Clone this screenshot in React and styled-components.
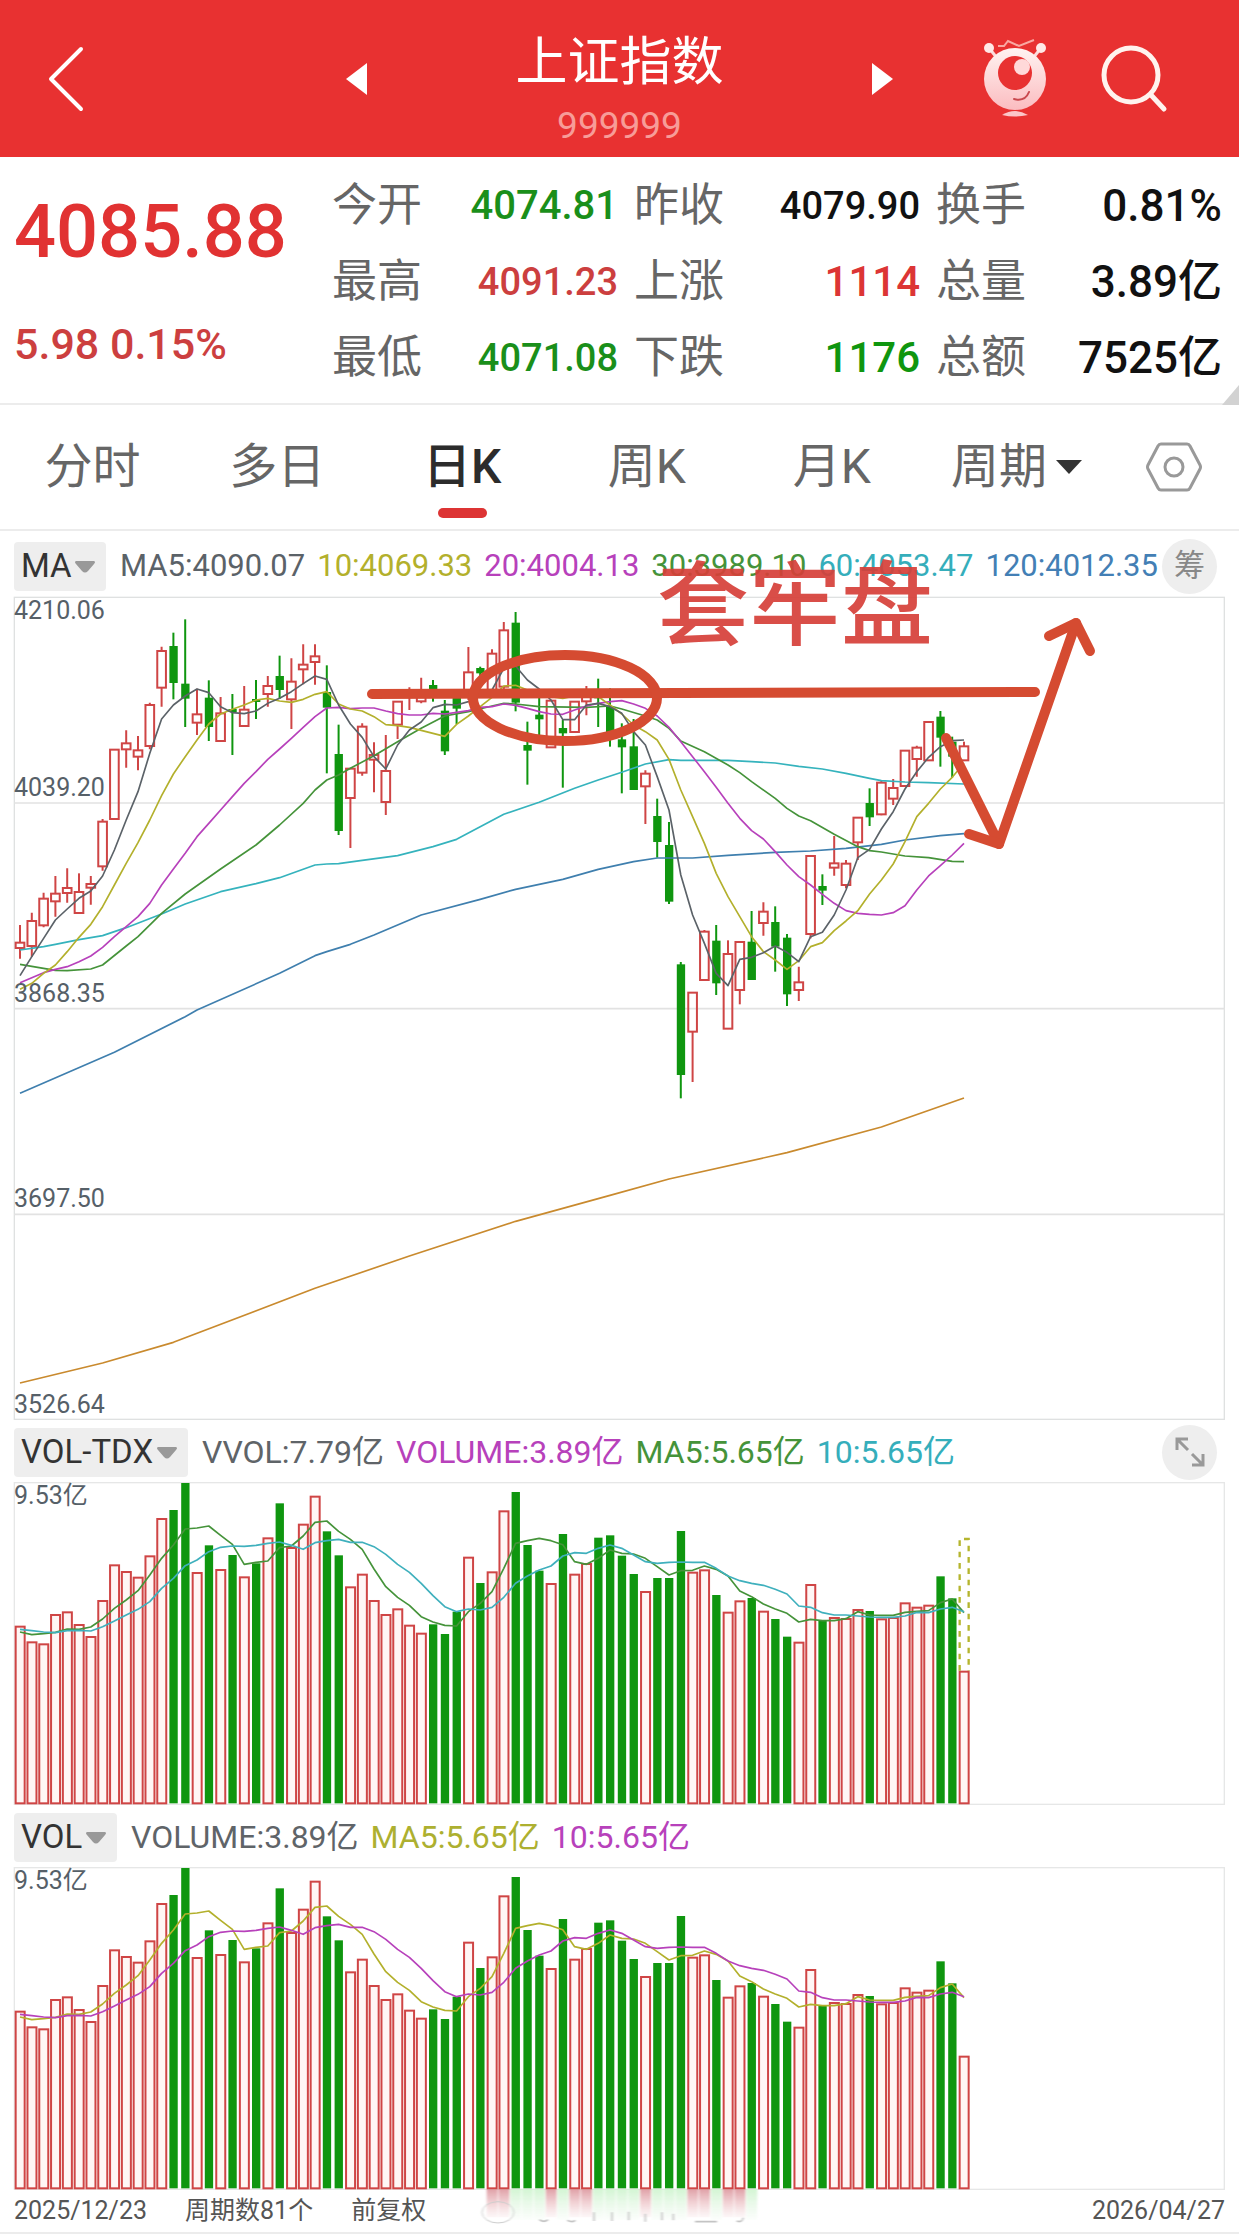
import React, { useState } from "react";
import styled, { createGlobalStyle } from "styled-components";

const RED = "#cf4545";
const GREEN = "#0f960f";

// body top, body bottom, wick top, wick bottom, direction (1 = up, 0 = down)
const candles = [
  [1058, 1074, 1005, 1106, 1],
  [993, 1068, 968, 1100, 1],
  [926, 1006, 908, 1012, 1],
  [911, 934, 858, 980, 1],
  [894, 909, 835, 938, 1],
  [906, 969, 850, 969, 1],
  [882, 893, 858, 944, 1],
  [695, 829, 687, 842, 1],
  [479, 687, 479, 690, 1],
  [460, 478, 421, 533, 1],
  [481, 500, 438, 541, 1],
  [345, 468, 338, 478, 1],
  [183, 293, 170, 350, 1],
  [168, 279, 128, 328, 0],
  [281, 326, 88, 411, 0],
  [373, 398, 296, 435, 1],
  [323, 411, 271, 453, 0],
  [370, 453, 321, 453, 1],
  [357, 366, 312, 495, 0],
  [359, 408, 288, 408, 1],
  [327, 336, 270, 387, 0],
  [288, 312, 258, 350, 1],
  [258, 300, 197, 326, 0],
  [275, 328, 205, 417, 1],
  [224, 238, 163, 283, 1],
  [199, 216, 163, 284, 1],
  [306, 353, 226, 550, 0],
  [492, 723, 404, 735, 0],
  [536, 624, 536, 774, 1],
  [410, 548, 400, 557, 1],
  [495, 509, 457, 607, 1],
  [543, 636, 435, 675, 1],
  [335, 404, 335, 447, 1],
  [305, 318, 292, 360, 1],
  [318, 334, 263, 340, 1],
  [285, 298, 270, 335, 0],
  [362, 484, 330, 495, 0],
  [318, 356, 318, 402, 0],
  [247, 310, 171, 330, 1],
  [234, 250, 230, 260, 0],
  [191, 300, 178, 310, 1],
  [121, 290, 96, 300, 1],
  [98, 338, 66, 364, 0],
  [465, 482, 395, 584, 0],
  [374, 388, 320, 450, 0],
  [332, 472, 332, 472, 1],
  [414, 430, 390, 593, 0],
  [335, 426, 335, 426, 1],
  [318, 334, 288, 376, 1],
  [316, 325, 266, 411, 0],
  [350, 427, 295, 470, 0],
  [448, 472, 400, 610, 0],
  [469, 600, 387, 600, 0],
  [551, 589, 541, 702, 1],
  [678, 756, 626, 803, 0],
  [765, 935, 696, 942, 0],
  [1123, 1455, 1116, 1525, 0],
  [1208, 1325, 1208, 1476, 1],
  [1025, 1170, 1020, 1170, 1],
  [1052, 1180, 1005, 1215, 0],
  [1092, 1316, 1051, 1316, 1],
  [1056, 1200, 1056, 1243, 1],
  [1055, 1170, 963, 1170, 0],
  [965, 999, 937, 1037, 1],
  [996, 1070, 949, 1145, 0],
  [1043, 1213, 1032, 1248, 0],
  [1177, 1200, 1130, 1233, 1],
  [798, 1032, 798, 1045, 1],
  [888, 902, 853, 945, 0],
  [820, 833, 738, 857, 1],
  [821, 885, 810, 895, 1],
  [683, 757, 683, 810, 1],
  [639, 682, 595, 708, 0],
  [578, 673, 572, 676, 1],
  [594, 626, 567, 645, 1],
  [482, 588, 482, 588, 1],
  [473, 507, 467, 560, 1],
  [396, 511, 396, 511, 1],
  [380, 443, 363, 530, 0],
  [455, 500, 440, 563, 0],
  [469, 511, 455, 511, 1],
];

const volumes = [
  620, 667, 673, 585, 577, 615, 651, 543, 436, 456, 473, 409, 297, 270, 189,
  459, 376, 450, 405, 472, 430, 355, 250, 384, 314, 230, 334, 406, 502, 464,
  543, 585, 568, 617, 641, 613, 642, 575, 413, 489, 457, 274, 216, 375, 452,
  492, 342, 464, 432, 353, 346, 407, 462, 516, 474, 474, 333, 458, 451, 525,
  578, 544, 534, 575, 597, 650, 668, 495, 600, 594, 597, 570, 573, 598, 594,
  550, 563, 557, 469, 535, 755,
];

const volumeMa5 = [
  636, 644, 641, 637, 627, 628, 621, 597, 565, 540, 512, 465, 415, 375, 327,
  324, 318, 346, 373, 433, 427, 423, 383, 378, 348, 307, 303, 334, 358, 388,
  447, 500, 532, 556, 590, 606, 616, 618, 575, 550, 515, 445, 370, 362, 355,
  362, 374, 425, 433, 415, 390, 400, 402, 415, 440, 465, 452, 451, 438, 448,
  468, 513, 530, 552, 567, 580, 606, 598, 602, 602, 596, 575, 585, 586, 586,
  577, 574, 572, 548, 537, 578,
];

const volumeMa10 = [
  628, 632, 636, 638, 632, 631, 633, 620, 603, 585, 568, 545, 505, 475, 437,
  420, 395, 382, 378, 379, 376, 370, 366, 376, 388, 368, 362, 358, 367, 367,
  380, 403, 433, 457, 490, 527, 560, 575, 567, 570, 562, 532, 490, 468, 450,
  438, 408, 398, 400, 385, 375, 385, 405, 425, 430, 427, 426, 427, 427, 445,
  468, 482, 490, 496, 508, 522, 558, 562, 578, 585, 585, 588, 591, 592, 592,
  588, 577, 578, 567, 562, 575,
];

const ma5 = [
  1157, 1100, 1045, 990, 957, 925, 903, 858, 780, 690, 605, 490, 387, 345, 318,
  297, 308, 350, 368, 371, 363, 340, 325, 305, 281, 258, 268, 345, 402, 442,
  500, 537, 465, 420, 396, 353, 343, 345, 335, 318, 300, 235, 228, 270, 297,
  330, 389, 389, 345, 340, 350, 370, 425, 465, 560, 660, 855, 975, 1060, 1150,
  1187, 1108, 1102, 1088, 1068, 1087, 1115, 1040, 1027, 975, 900, 803, 778,
  717, 665, 597, 545, 502, 470, 452, 450,
];

const ma10 = [
  1198, 1180, 1150, 1125, 1085, 1042, 1003, 950, 885, 820, 758, 690, 617, 552,
  500, 450, 402, 372, 358, 345, 330, 325, 333, 337, 328, 313, 305, 342, 357,
  363, 380, 404, 407, 412, 421, 430, 439, 403, 378, 350, 322, 288, 286, 300,
  310, 320, 325, 318, 310, 320, 345, 372, 405, 425, 450, 508, 600, 680, 760,
  850, 920, 980, 1040, 1085, 1110, 1138, 1112, 1070, 1058, 1022, 993, 962,
  912, 870, 822, 755, 680, 640, 597, 562, 520,
];

const ma20 = [
  1178, 1163, 1148, 1138, 1130, 1115, 1098, 1072, 1040, 1010, 980, 940, 885,
  837, 790, 740, 700, 660, 620, 580, 545, 508, 477, 445, 412, 380, 354, 352,
  356, 354, 354, 363, 371, 375, 375, 370, 372, 367, 362, 352, 350, 342, 346,
  355, 365, 372, 373, 360, 348, 340, 335, 332, 342, 355, 378, 412, 455, 500,
  545, 592, 640, 685, 722, 747, 785, 825, 860, 885, 913, 940, 962, 970, 973,
  975, 968, 947, 900, 858, 827, 795, 760,
];

// the slow averages are kept as [day, y] pairs
const ma30 = [
  [0, 1123], [2, 1135], [3, 1141], [4, 1142], [6, 1137], [7, 1125], [9, 1068],
  [10, 1040], [12, 970], [14, 912], [17, 837], [20, 765], [22, 705], [24, 640],
  [25, 600], [26, 570], [27, 555], [28, 535], [30, 497], [32, 455], [34, 415],
  [36, 378], [38, 365], [40, 348], [41, 340], [42, 342], [44, 350], [48, 352],
  [50, 348], [51, 357], [53, 378], [54, 390], [55, 415], [56, 453], [58, 485],
  [60, 525], [61, 548], [62, 575], [64, 625], [65, 655], [66, 678], [67, 692],
  [69, 733], [71, 770], [72, 782], [73, 786], [75, 798], [77, 803], [79, 814],
  [80, 815],
];

const ma60 = [
  [0, 1080], [2, 1070], [3, 1063], [5, 1049], [7, 1037], [9, 1013], [12, 972],
  [14, 942], [17, 905], [20, 881], [22, 863], [25, 825], [26, 822], [27, 821],
  [29, 811], [32, 797], [35, 770], [37, 748], [39, 710], [41, 673], [44, 637],
  [47, 595], [49, 570], [51, 547], [53, 522], [55, 509], [56, 511], [60, 511],
  [62, 515], [64, 519], [66, 529], [68, 537], [70, 550], [72, 565], [73, 572],
  [75, 576], [77, 578], [80, 582],
];

const ma120 = [
  [0, 1510], [8, 1387], [14, 1280], [15, 1260], [22, 1150], [25, 1097],
  [26, 1085], [28, 1063], [30, 1035], [34, 975], [39, 928], [42, 898],
  [46, 868], [49, 838], [52, 815], [54, 804], [57, 804], [60, 796], [64, 787],
  [67, 783], [70, 775], [73, 763], [75, 750], [78, 737], [80, 731],
];

const ma250 = [
  [0, 2379], [7, 2319], [13, 2257], [25, 2095], [33, 1998], [42, 1894],
  [50, 1816], [55, 1767], [65, 1688], [73, 1611], [80, 1524],
];

const averages = [
  { data: ma250, color: "#c98a2e" },
  { data: ma120, color: "#3f7fae" },
  { data: ma60, color: "#35b3bd" },
  { data: ma30, color: "#45933a" },
  { data: ma20, color: "#b741bb" },
  { data: ma10, color: "#b3b02c" },
  { data: ma5, color: "#5b6268" },
];

const priceLabels = [
  { text: "4210.06", y: 22 },
  { text: "4039.20", y: 199 },
  { text: "3868.35", y: 405 },
  { text: "3697.50", y: 610 },
  { text: "3526.64", y: 816 },
];

const quotes = [
  { label: "今开", value: "4074.81", color: "#1a8f1a", size: 40 },
  { label: "昨收", value: "4079.90", color: "#111", size: 38 },
  { label: "换手", value: "0.81%", color: "#111", size: 44 },
  { label: "最高", value: "4091.23", color: "#cc3f3f", size: 38 },
  { label: "上涨", value: "1114", color: "#dc3535", size: 42 },
  { label: "总量", value: "3.89亿", color: "#111", size: 44 },
  { label: "最低", value: "4071.08", color: "#1a8f1a", size: 38 },
  { label: "下跌", value: "1176", color: "#0f960f", size: 42 },
  { label: "总额", value: "7525亿", color: "#111", size: 44 },
];

const tabs = ["分时", "多日", "日K", "周K", "月K"];

const maLegend = [
  { text: "MA5:4090.07", color: "#5b6268" },
  { text: "10:4069.33", color: "#b3b02c" },
  { text: "20:4004.13", color: "#b741bb" },
  { text: "30:3989.10", color: "#45933a" },
  { text: "60:4053.47", color: "#35aebb" },
  { text: "120:4012.35", color: "#437fb5" },
];

const tdxLegend = [
  { text: "VVOL:7.79亿", color: "#5f6468" },
  { text: "VOLUME:3.89亿", color: "#b741bb" },
  { text: "MA5:5.65亿", color: "#45933a" },
  { text: "10:5.65亿", color: "#35aebb" },
];

const volLegend = [
  { text: "VOLUME:3.89亿", color: "#5f6468" },
  { text: "MA5:5.65亿", color: "#adb030" },
  { text: "10:5.65亿", color: "#b741bb" },
];

const dayX = (day) => 60 + day * 35.4;

const toPoints = (data) =>
  data
    .map((item, index) =>
      Array.isArray(item) ? `${dayX(item[0])},${item[1]}` : `${dayX(index)},${item}`
    )
    .join(" ");

const Line = ({ data, color }) => (
  <polyline
    points={toPoints(data)}
    fill="none"
    stroke={color}
    strokeWidth="5"
    strokeLinejoin="round"
  />
);

const PriceChart = () => (
  <Chart viewBox="0 0 1211 823" role="img" aria-label="日K">
    <g transform="scale(0.33333) translate(-42 -21)">
      <rect x="43" y="22" width="3630" height="2466" fill="#fff" stroke="#dfe1e1" strokeWidth="4" />
      {[639, 1256, 1873].map((y) => (
        <path key={y} d={`M42 ${y}H3675`} stroke="#e2e2e2" strokeWidth="5" />
      ))}
      {candles.map(([top, bottom, high, low, up], day) => {
        const x = dayX(day);
        return up ? (
          <g key={day} stroke={RED} strokeWidth="6" fill="none">
            <path d={`M${x} ${high}V${top}M${x} ${bottom}V${low}`} />
            <rect x={x - 13} y={top} width="26" height={bottom - top} />
          </g>
        ) : (
          <g key={day} fill={GREEN}>
            <rect x={x - 3} y={high} width="6" height={low - high} />
            <rect x={x - 12} y={top} width="25" height={bottom - top} />
          </g>
        );
      })}
      {averages.map(({ data, color }) => (
        <Line data={data} color={color} key={color} />
      ))}
    </g>
    {priceLabels.map(({ text, y }) => (
      <ChartLabel x="0" y={y} key={text}>
        {text}
      </ChartLabel>
    ))}
    <g fill="none" stroke="#d54b31" strokeWidth="10" strokeLinecap="round" strokeLinejoin="round">
      <path d="M358 97L1021 95" />
      <ellipse cx="551" cy="101" rx="92" ry="43" />
      <path d="M932 141L985 247L1062 26" />
      <path d="M955 237L985 247" />
      <path d="M1035 39L1062 26L1076 54" />
    </g>
    <NoteText x="643" y="41">
      套牢盘
    </NoteText>
  </Chart>
);

const VolumeChart = ({ label, fast, slow, forecast, reflection }) => (
  <Chart viewBox="0 0 1211 323" role="img" aria-label={label}>
    <defs>
      <linearGradient id="fadeUp" x1="0" y1="0" x2="0" y2="1">
        <stop offset="0" stopColor="#d98a92" stopOpacity="0.8" />
        <stop offset="1" stopColor="#e9b3b8" stopOpacity="0.1" />
      </linearGradient>
      <linearGradient id="fadeDown" x1="0" y1="0" x2="0" y2="1">
        <stop offset="0" stopColor="#c9f3c9" stopOpacity="0.8" />
        <stop offset="1" stopColor="#dcf3dc" stopOpacity="0.1" />
      </linearGradient>
      <filter id="soft" x="-20%" y="-20%" width="140%" height="140%">
        <feGaussianBlur stdDeviation="3 1" />
      </filter>
    </defs>
    <g transform="scale(0.33333) translate(-42 -186)">
      <rect x="43" y="188" width="3630" height="965" fill="#fff" stroke="#e6e7e7" strokeWidth="4" />
      {reflection && (
        <g filter="url(#soft)">
          {candles.slice(40, 63).map(([, , , , up], index) => (
            <rect
              key={index}
              x={dayX(index + 40) - 16}
              y="1153"
              width="33"
              height={up ? 84 : 92}
              fill={up ? "url(#fadeUp)" : "url(#fadeDown)"}
            />
          ))}
          <ellipse cx="1494" cy="1222" rx="48" ry="32" fill="none" stroke="#ccc" strokeWidth="3" />
          <path
            d="M1618 1244q14 10 26 0M1702 1246q14 8 24 0M1782 1248v-26M1836 1248v-26M1886 1246v-26M1936 1250v-24M1986 1246v-24M2020 1246v-20M2085 1250h66M2210 1248q16 6 20-10"
            fill="none"
            stroke="#c4c4c4"
            strokeWidth="5"
          />
        </g>
      )}
      {volumes.map((top, day) =>
        candles[day][4] ? (
          <rect
            key={day}
            x={dayX(day) - 13}
            y={top}
            width="27"
            height={1150 - top}
            fill="#fff6f5"
            stroke={RED}
            strokeWidth="6"
          />
        ) : (
          <rect key={day} x={dayX(day) - 12} y={top} width="25" height={1150 - top} fill={GREEN} />
        )
      )}
      {forecast && (
        <path
          d={`M${dayX(80) - 13} 752V357h27V752`}
          fill="none"
          stroke="#b5b52e"
          strokeWidth="7"
          strokeDasharray="17 17"
        />
      )}
      <Line data={volumeMa5} color={fast} />
      <Line data={volumeMa10} color={slow} />
    </g>
    <ChartLabel x="0" y="22">
      9.53亿
    </ChartLabel>
  </Chart>
);

const IndicatorPicker = ({ label, value }) => (
  <Picker>
    <PickerSelect aria-label={label} defaultValue={value}>
      <option>{value}</option>
    </PickerSelect>
    <svg width="22" height="13" viewBox="0 0 22 13" aria-hidden="true">
      <path d="M2 1h18q2 1 0 3l-6 7q-3 3-6 0L2 4Q0 2 2 1z" fill="#999" />
    </svg>
  </Picker>
);

const IndicatorBar = ({ label, value, legend, size, children }) => (
  <Bar>
    <IndicatorPicker label={label} value={value} />
    <Legend $size={size}>
      {legend.map(({ text, color }) => (
        <LegendItem $color={color} key={text}>
          {text}
        </LegendItem>
      ))}
    </Legend>
    {children}
  </Bar>
);

const App = () => {
  const [activeTab, setActiveTab] = useState("日K");

  return (
    <Page>
      <GlobalStyle />
      <Header>
        <IconButton aria-label="返回">
          <svg width="36" height="66" viewBox="0 0 36 66" fill="none">
            <path d="M33 3L3 33L33 63" stroke="#fff" strokeWidth="4" strokeLinecap="round" strokeLinejoin="round" />
          </svg>
        </IconButton>
        <HeaderCenter>
          <IconButton aria-label="上一个">
            <svg width="22" height="34" viewBox="0 0 22 34">
              <path d="M22 1v32L1 17z" fill="#fff" />
            </svg>
          </IconButton>
          <HeaderTitles>
            <HeaderTitle>上证指数</HeaderTitle>
            <HeaderCode>999999</HeaderCode>
          </HeaderTitles>
          <IconButton aria-label="下一个">
            <svg width="22" height="34" viewBox="0 0 22 34">
              <path d="M0 1v32l21-16z" fill="#fff" />
            </svg>
          </IconButton>
        </HeaderCenter>
        <HeaderActions>
          <IconButton aria-label="助手">
            <svg width="64" height="80" viewBox="0 0 64 80" fill="none">
              <defs>
                <linearGradient id="robot" x1="0" y1="0" x2="0" y2="1">
                  <stop offset="0" stopColor="#fff3f1" />
                  <stop offset="1" stopColor="#fbbcc0" />
                </linearGradient>
              </defs>
              <path d="M6 9l8 10M58 9l-8 10" stroke="#fcdcdc" strokeWidth="3" />
              <circle cx="6" cy="9" r="5" fill="#ffe9e7" />
              <circle cx="58" cy="9" r="5" fill="#ffe9e7" />
              <path d="M15 7h6l4-5l11 5l15-6" stroke="#f9a8a2" strokeWidth="2" />
              <circle cx="32" cy="40" r="31" fill="url(#robot)" />
              <circle cx="32" cy="34" r="17" fill="#e83131" />
              <circle cx="39" cy="28" r="8" fill="#ffd9d9" />
              <path d="M31 60q11 3 15-7" stroke="#c9484e" strokeWidth="2" strokeLinecap="round" />
              <path d="M19 76q13-8 26 0q-13 3-26 0z" fill="#fcc6c8" />
            </svg>
          </IconButton>
          <IconButton aria-label="搜索">
            <svg width="68" height="68" viewBox="0 0 68 68" fill="none" stroke="#fff3ee" strokeLinecap="round">
              <circle cx="30" cy="30" r="27" strokeWidth="5" />
              <path d="M50 50L63 64" strokeWidth="5" />
            </svg>
          </IconButton>
        </HeaderActions>
      </Header>

      <Summary>
        <div>
          <Price>4085.88</Price>
          <Change>5.98 0.15%</Change>
        </div>
        <QuoteGrid>
          {quotes.map(({ label, value, color, size }) => (
            <Quote key={label}>
              <QuoteLabel>{label}</QuoteLabel>
              <QuoteValue $color={color} $size={size}>
                {value}
              </QuoteValue>
            </Quote>
          ))}
        </QuoteGrid>
        <Corner width="17" height="20" viewBox="0 0 17 20" aria-hidden="true">
          <path d="M17 0v20H0z" fill="#d2d2d2" />
        </Corner>
      </Summary>

      <Tabs>
        {tabs.map((tab) => (
          <Tab
            key={tab}
            aria-pressed={tab === activeTab}
            $active={tab === activeTab}
            onClick={() => setActiveTab(tab)}
          >
            {tab}
          </Tab>
        ))}
        <PeriodPicker>
          <PeriodSelect aria-label="周期" defaultValue="周期">
            <option>周期</option>
          </PeriodSelect>
          <svg width="26" height="14" viewBox="0 0 26 14" aria-hidden="true">
            <path d="M0 0h26L13 14z" fill="#333" />
          </svg>
        </PeriodPicker>
        <SettingsButton aria-label="设置">
          <svg width="56" height="52" viewBox="0 0 56 52" fill="none" stroke="#999" strokeWidth="3">
            <path d="M15 3h26q2 0 3 2l10 19q1 2 0 4L44 47q-1 2-3 2H15q-2 0-3-2L2 28q-1-2 0-4L12 5q1-2 3-2z" />
            <circle cx="28" cy="26" r="9" />
          </svg>
        </SettingsButton>
      </Tabs>

      <main>
        <IndicatorBar label="主图指标" value="MA" legend={maLegend} size={31}>
          <RoundButton>筹</RoundButton>
        </IndicatorBar>
        <PriceChart />
        <IndicatorBar label="副图指标一" value="VOL-TDX" legend={tdxLegend} size={32}>
          <RoundButton aria-label="全屏">
            <svg width="30" height="30" viewBox="0 0 30 30" fill="none" stroke="#999" strokeWidth="3">
              <path d="M2 13V2h11M2 2l11 11" />
              <path d="M28 17v11H17M28 28L17 17" />
            </svg>
          </RoundButton>
        </IndicatorBar>
        <VolumeChart label="VOL-TDX" fast="#45933a" slow="#3fb0bd" forecast />
        <IndicatorBar label="副图指标二" value="VOL" legend={volLegend} size={32} />
        <VolumeChart label="VOL" fast="#b3b02c" slow="#b741bb" reflection />
      </main>

      <Footer>
        <span>2025/12/23</span>
        <span>周期数81个</span>
        <span>前复权</span>
        <FooterEnd>2026/04/27</FooterEnd>
      </Footer>
    </Page>
  );
};

const GlobalStyle = createGlobalStyle`
  * {
    box-sizing: border-box;
  }
  body {
    margin: 0;
    background: #fff;
    font-family: Roboto, "Noto Sans CJK SC", sans-serif;
  }
  button,
  select {
    margin: 0;
    padding: 0;
    border: 0;
    background: none;
    font: inherit;
    color: inherit;
    cursor: pointer;
  }
`;

const Page = styled.div`
  overflow: hidden;
`;

const Header = styled.header`
  display: grid;
  grid-template-columns: 1fr 550px 1fr;
  align-items: center;
  min-height: 157px;
  padding: 0 48px;
  background: #e83131;
  color: #fff;
`;

const IconButton = styled.button`
  display: flex;
`;

const HeaderCenter = styled.div`
  display: flex;
  align-items: center;
  justify-content: space-between;
`;

const HeaderTitles = styled.div`
  padding-top: 22px;
  text-align: center;
`;

const HeaderTitle = styled.h1`
  margin: 0;
  font-size: 52px;
  font-weight: 400;
  line-height: 72px;
`;

const HeaderCode = styled.div`
  font-size: 37px;
  line-height: 54px;
  color: #f79c98;
`;

const HeaderActions = styled.div`
  display: flex;
  align-items: center;
  justify-content: flex-end;
  gap: 54px;
  padding-right: 22px;
`;

const Summary = styled.section`
  position: relative;
  display: grid;
  grid-template-columns: 318px 1fr;
  padding: 11px 17px 7px 14px;
  border-bottom: 2px solid #ececec;
`;

const Price = styled.div`
  font-size: 74px;
  font-weight: 500;
  line-height: 128px;
  color: #e13232;
`;

const Change = styled.div`
  font-size: 43px;
  font-weight: 500;
  line-height: 96px;
  color: #cc3f3f;
`;

const QuoteGrid = styled.dl`
  display: grid;
  grid-template-columns: repeat(3, 1fr);
  column-gap: 16px;
  margin: 0;
`;

const Quote = styled.div`
  display: flex;
  align-items: center;
  justify-content: space-between;
  height: 76px;
`;

const QuoteLabel = styled.dt`
  font-size: 45px;
  line-height: 60px;
  color: #666;
`;

const QuoteValue = styled.dd`
  margin: 0;
  font-size: ${(props) => props.$size}px;
  font-weight: 500;
  line-height: 60px;
  color: ${(props) => props.$color};
`;

const Corner = styled.svg`
  position: absolute;
  right: 0;
  bottom: -2px;
`;

const Tabs = styled.nav`
  display: flex;
  border-bottom: 2px solid #ececec;
`;

const Tab = styled.button`
  display: flex;
  flex: 1 1 0;
  flex-direction: column;
  align-items: center;
  padding: 32px 0 11px;
  font-size: 48px;
  font-weight: ${(props) => (props.$active ? 500 : 400)};
  line-height: 60px;
  color: ${(props) => (props.$active ? "#2c2c2c" : "#666")};
  &::after {
    content: "";
    width: 49px;
    height: 10px;
    margin-top: 11px;
    border-radius: 5px;
    background: ${(props) => (props.$active ? "#dd3434" : "transparent")};
  }
`;

const PeriodPicker = styled.label`
  display: flex;
  flex: 1 1 0;
  align-items: center;
  justify-content: center;
  gap: 8px;
  color: #666;
`;

const PeriodSelect = styled.select`
  appearance: none;
  font-size: 48px;
  line-height: 60px;
`;

const SettingsButton = styled.button`
  display: flex;
  flex: 0 0 130px;
  align-items: center;
  justify-content: center;
`;

const Bar = styled.div`
  display: flex;
  align-items: center;
  gap: 14px;
  min-height: 62px;
  padding: 2px 22px 0 14px;
  &:first-child {
    min-height: 66px;
    padding-top: 4px;
  }
`;

const Picker = styled.label`
  display: flex;
  align-items: center;
  gap: 2px;
  height: 49px;
  padding: 0 10px 0 7px;
  border-radius: 4px;
  background: #eee;
  color: #333;
`;

const PickerSelect = styled.select`
  appearance: none;
  font-size: 33px;
  line-height: 48px;
`;

const Legend = styled.div`
  display: flex;
  flex: 1;
  gap: 12px;
  font-size: ${(props) => props.$size}px;
  line-height: 48px;
  white-space: nowrap;
`;

const LegendItem = styled.span`
  color: ${(props) => props.$color};
`;

const RoundButton = styled.button`
  display: flex;
  flex-shrink: 0;
  align-items: center;
  justify-content: center;
  width: 55px;
  height: 55px;
  margin-left: -14px;
  border-radius: 50%;
  background: #eee;
  font-size: 31px;
  line-height: 40px;
  color: #888;
`;

const Chart = styled.svg`
  position: relative;
  display: block;
  width: calc(100% - 28px);
  margin: 0 14px;
  overflow: visible;
`;

const ChartLabel = styled.text`
  font-size: 25px;
  fill: #566068;
`;

const NoteText = styled.text`
  font-size: 92px;
  font-weight: 500;
  fill: #d63f38;
  fill-opacity: 0.92;
`;

const Footer = styled.footer`
  display: flex;
  align-items: center;
  gap: 38px;
  height: 44px;
  padding: 0 14px;
  border-bottom: 2px solid #ececec;
  font-size: 25px;
  line-height: 36px;
  color: #555;
`;

const FooterEnd = styled.span`
  margin-left: auto;
`;

export default App;
